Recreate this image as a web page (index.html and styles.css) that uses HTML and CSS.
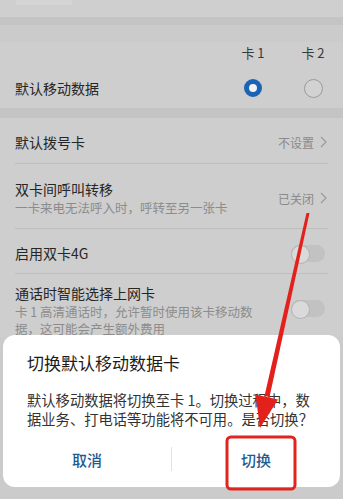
FILE: index.html
```html
<!doctype html>
<html>
<head>
<meta charset="utf-8">
<title>双卡管理</title>
<link rel="stylesheet" href="styles.css">
</head>
<body>
<div class="screen">
	<div class="top"><span class="top-btn"></span></div>
	<div class="band"></div>
	<div class="group">
		<div class="sim-grid sim-head"><span></span><span>卡 1</span><span>卡 2</span></div>
		<div class="sim-grid sim-row">
			<span class="label">默认移动数据</span>
			<span class="radio on"></span>
			<span class="radio"></span>
		</div>
	</div>
	<div class="band tall"></div>
	<div class="group">
		<div class="item row-dial">
			<span class="label">默认拨号卡</span>
			<span class="value">不设置<svg class="chev" width="7" height="12" viewBox="0 0 7 12"><path d="M1 1l5 5-5 5" fill="none" stroke="#9a9a9a" stroke-width="1.2"/></svg></span>
		</div>
		<div class="divider"></div>
		<div class="item row-forward">
			<div class="text">
				<div class="label">双卡间呼叫转移</div>
				<div class="sub">一卡来电无法呼入时，呼转至另一张卡</div>
			</div>
			<span class="value">已关闭<svg class="chev" width="7" height="12" viewBox="0 0 7 12"><path d="M1 1l5 5-5 5" fill="none" stroke="#9a9a9a" stroke-width="1.2"/></svg></span>
		</div>
		<div class="divider"></div>
		<div class="item row-4g">
			<span class="label">启用双卡4G</span>
			<span class="switch"></span>
		</div>
		<div class="divider"></div>
		<div class="item row-smart">
			<div class="text narrow">
				<div class="label">通话时智能选择上网卡</div>
				<div class="sub">卡 1 高清通话时，允许暂时使用该卡移动数据，这可能会产生额外费用</div>
			</div>
			<span class="switch"></span>
		</div>
	</div>

	<div class="dialog">
		<div class="dlg-title">切换默认移动数据卡</div>
		<div class="dlg-body">默认移动数据将切换至卡 1。切换过程中，数<br>据业务、打电话等功能将不可用。是否切换？</div>
		<div class="dlg-btns">
			<span class="btn">取消</span>
			<span class="btn-line"></span>
			<span class="btn">切换</span>
		</div>
	</div>

	<span class="watermark">Bai<span>du</span>经验</span>

	<svg class="mark" width="343" height="499" viewBox="0 0 343 499">
		<polygon points="306.5,213 309.5,213 269.5,397 264.5,396" fill="#e3201b"/>
		<polygon points="260,428 278,399.5 255.5,394.5" fill="#e3201b"/>
		<rect x="227" y="437" width="68" height="52" rx="4" fill="none" stroke="#e0241e" stroke-width="3"/>
	</svg>
</div>
</body>
</html>
```

FILE: styles.css
```css
*{box-sizing: border-box;}
body{margin:0; background:#cbcbcb; font-family:"Noto Sans CJK SC","Noto Sans",sans-serif; color:#2b2b2b;}
.screen{position: relative; width:343px; height:499px; overflow: hidden; background:#cbcbcb;}

.top{height:17px; background:#cfcfcf;}
.top-btn{display:block; margin-left:16px; width:56px; height:5px; background:#d5d5d5;}
.band{height:8px; background:#c4c4c4;}
.band.tall{height:10px;}
.group{background:#cecece;}

.label{font-size:14px; line-height:20px; color:#262626;}
.sub{font-size:12.5px; line-height:18px; color:#8c8c8c;}
.value{display:flex; align-items:center; gap:6px; font-size:12px; color:#8a8a8a;}

.sim-grid{display:grid; grid-template-columns:1fr 60px 60px; align-items:center; justify-items:center;}
.sim-grid .label{justify-self:start; padding-left:15px;}
.sim-head{margin-top:17px; height:20px; font-size:13px; color:#3a3a3a;}
.sim-row{height:46px; padding-top:6px;}
.radio{width:19px; height:19px; border-radius:50%; border:1px solid #9a9a9a; background:#d2d2d2;}
.radio.on{width:18px; height:18px; border:5px solid #1b63b4; background:#f2f2f2;}

.item{display:flex; align-items:center; justify-content:space-between; padding:0 16px 0 15px;}
.row-dial{height:45px; padding-top:3px;}
.row-forward{height:64px; padding-top:4px;}
.row-4g{height:44px; padding-top:4px; padding-right:18px;}
.row-smart{align-items:flex-start; padding-top:9px; padding-right:18px;}
.row-smart .switch{margin-top:17px;}
.row-smart .sub{line-height:16.5px; margin-top:1px;}
.text.narrow{width:250px;}
.divider{height:1px; margin:0 15px; background:#bebebe;}

.switch{position: relative; width:34px; height:17px; border-radius:9px; background:#c2c2c2;}
.switch:before{content:""; position:absolute; left:0; top:0; width:17px; height:17px; border-radius:50%; background:#dadada; border:1px solid #b3b3b3;}

.dialog{position:absolute; left:3px; top:335px; width:337px; padding:16px 20px 0 24px; background:#fff; border-radius:12px;}
.dlg-title{font-size:17px; line-height:24px; color:#1c1c1c;}
.dlg-body{margin-top:15px; font-size:14.3px; line-height:19px; color:#333; white-space:nowrap;}
.dlg-btns{display:flex; align-items:center; height:56px; margin:3px -20px 0 -24px;}
.btn{flex:1; text-align:center; font-size:15px; font-weight:500; color:#1d5a92;}
.btn-line{width:1px; height:24px; background:#e2e2e2;}

.watermark{position:absolute; left:250px; top:472px; font-size:11px; line-height:12px; color:#fff; opacity:.5; font-family:"Liberation Sans",sans-serif; letter-spacing:1px;}
.watermark span{margin:0 2px;}
.mark{position:absolute; left:0; top:0;}
```
